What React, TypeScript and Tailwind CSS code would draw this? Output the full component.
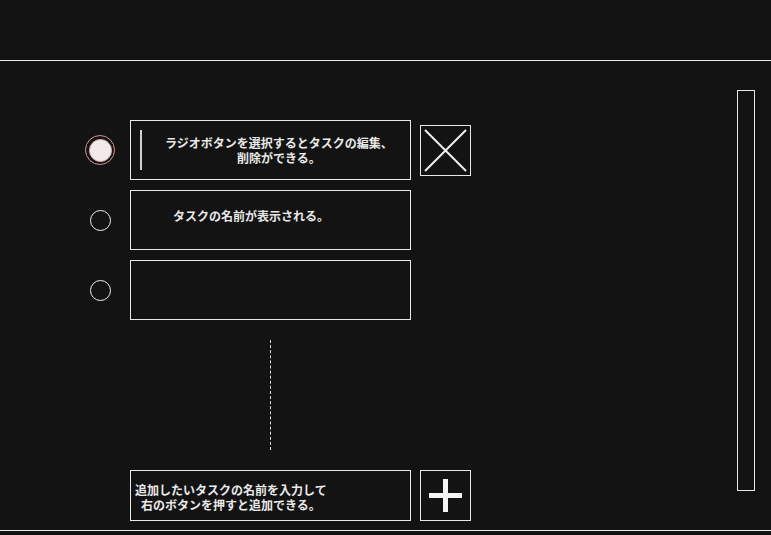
import React from "react";

const font = {
  fontFamily: '"Noto Sans CJK JP", "Noto Sans", sans-serif',
};

const Radio: React.FC<{ checked?: boolean }> = ({ checked = false }) =>
  checked ? (
    <div className="w-[30px] h-[30px] rounded-full border-[1.5px] border-[#e08e8e] flex items-center justify-center">
      <div className="w-[23px] h-[23px] rounded-full bg-[#f3e9e9] border border-[#c9b5b5]" />
    </div>
  ) : (
    <div className="w-[21px] h-[21px] rounded-full border-[1.5px] border-[#f0f0f0]" />
  );

const CloseIcon = () => (
  <svg width="49" height="49" viewBox="0 0 49 49">
    <line x1="4" y1="4" x2="45" y2="45" stroke="#f2f2f2" strokeWidth="2" />
    <line x1="45" y1="4" x2="4" y2="45" stroke="#f2f2f2" strokeWidth="2" />
  </svg>
);

const PlusIcon = () => (
  <svg width="49" height="49" viewBox="0 0 49 49">
    <rect x="8" y="22" width="33" height="5" fill="#f5f5f5" />
    <rect x="22" y="8" width="5" height="33" fill="#f5f5f5" />
  </svg>
);

export default function App() {
  return (
    <div
      className="w-[771px] h-[535px] bg-[#131313] text-[#e9e9e9] font-bold text-[12px] leading-[15px] overflow-hidden"
      style={font}
    >
      <header className="h-[61px] border-b border-[#e8e8e8]" />

      <main className="h-[470px] border-b border-[#e8e8e8] flex">
        <div className="flex-1 pt-[59px] pl-[85px]">
          <div className="flex flex-col gap-[10px]">
            <div className="flex items-center">
              <div className="w-[30px] flex justify-center">
                <Radio checked />
              </div>
              <div className="ml-[15px] w-[281px] h-[60px] border border-[#e8e8e8] flex items-center">
                <div className="ml-[9px] w-[2px] h-[40px] bg-[#cfcfcf]" />
                <p className="flex-1 text-center pl-[6px]">
                  ラジオボタンを選択するとタスクの編集、
                  <br />
                  削除ができる。
                </p>
              </div>
              <button className="ml-[9px] w-[51px] h-[51px] border border-[#e8e8e8] flex items-center justify-center">
                <CloseIcon />
              </button>
            </div>

            <div className="flex items-center">
              <div className="w-[30px] flex justify-center">
                <Radio />
              </div>
              <div className="ml-[15px] w-[281px] h-[60px] border border-[#e8e8e8] pt-[17px] pl-[42px]">
                タスクの名前が表示される。
              </div>
            </div>

            <div className="flex items-center">
              <div className="w-[30px] flex justify-center">
                <Radio />
              </div>
              <div className="ml-[15px] w-[281px] h-[60px] border border-[#e8e8e8]" />
            </div>
          </div>

          <div className="ml-[185px] mt-[20px] h-[110px] w-0 border-l border-dashed border-[#e0e0e0]" />

          <div className="mt-[20px] ml-[45px] flex items-start">
            <div className="w-[281px] h-[51px] border border-[#e8e8e8] pl-[4px] pt-[11px]">
              追加したいタスクの名前を入力して
              <br />
              <span className="pl-[6px]">右のボタンを押すと追加できる。</span>
            </div>
            <button className="ml-[9px] w-[51px] h-[51px] border border-[#e8e8e8] flex items-center justify-center">
              <PlusIcon />
            </button>
          </div>
        </div>

        <div className="pt-[29px] pr-[16px]">
          <div className="w-[18px] h-[401px] border border-[#e8e8e8]" />
        </div>
      </main>
    </div>
  );
}
